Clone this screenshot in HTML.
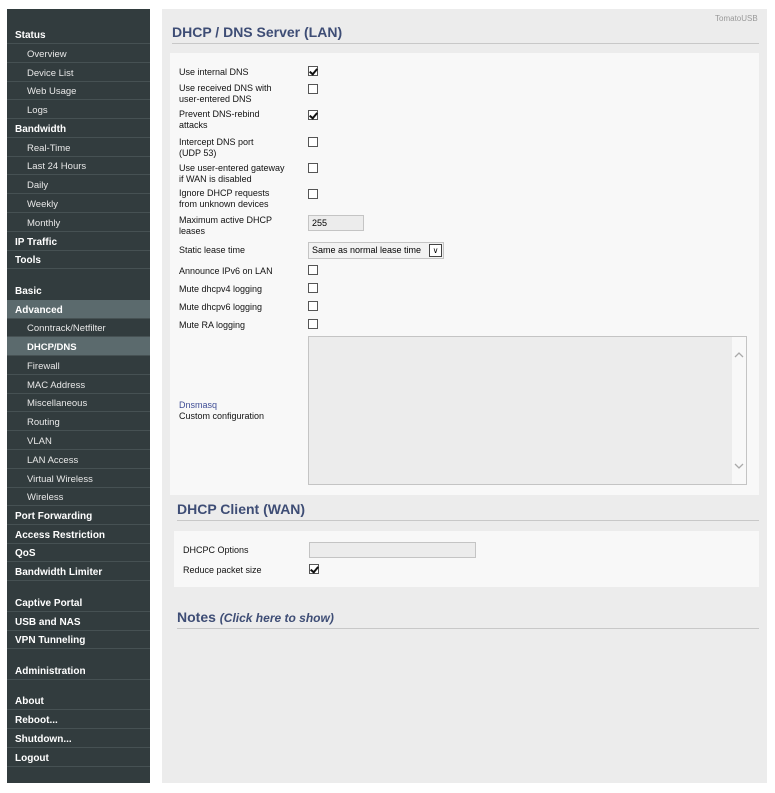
<!DOCTYPE html>
<html><head><meta charset="utf-8"><style>
*{margin:0;padding:0;box-sizing:border-box}
body{width:775px;height:793px;background:#fff;font-family:"Liberation Sans",sans-serif;position:relative;overflow:hidden}
#side{position:absolute;left:7px;top:9px;width:143px;height:774px;background:#323c3e}
.it{position:absolute;left:0;width:143px;height:19px;line-height:21px;color:#fff;font-size:10px;border-bottom:1px solid #465153}
.t{font-weight:bold;padding-left:8px}
.s{padding-left:20px;font-size:9.5px;color:#e8e8e8}
.hl{background:#5b6a6d}
#main{position:absolute;left:162px;top:9px;width:605px;height:774px;background:#ececec}
.h{position:absolute;color:#3e4d75;font-weight:bold;font-size:14px;border-bottom:1px solid #c8c8c8}
.box{position:absolute;background:#f8f8f8}
.l{position:absolute;font-size:9px;color:#111;line-height:11px}
.cb{position:absolute;width:10px;height:10px;border:1px solid #555;background:#fff}
.cb.c::after{content:"";position:absolute;left:2px;top:0px;width:3px;height:6px;border:solid #111;border-width:0 2px 2px 0;transform:rotate(40deg)}
.in{position:absolute;background:#ececec;border:1px solid #c4c4c4;font-size:9px;line-height:14px;padding-left:3px}
</style></head><body>
<div id="side">
<div class="it t" style="top:16px">Status</div>
<div class="it s" style="top:35px">Overview</div>
<div class="it s" style="top:54px">Device List</div>
<div class="it s" style="top:72px">Web Usage</div>
<div class="it s" style="top:91px">Logs</div>
<div class="it t" style="top:110px">Bandwidth</div>
<div class="it s" style="top:129px">Real-Time</div>
<div class="it s" style="top:147px">Last 24 Hours</div>
<div class="it s" style="top:166px">Daily</div>
<div class="it s" style="top:185px">Weekly</div>
<div class="it s" style="top:204px">Monthly</div>
<div class="it t" style="top:223px">IP Traffic</div>
<div class="it t" style="top:241px">Tools</div>
<div class="it t" style="top:272px;border:0">Basic</div>
<div class="it t hl" style="top:291px">Advanced</div>
<div class="it s" style="top:309px">Conntrack/Netfilter</div>
<div class="it s hl" style="top:328px;font-weight:bold;color:#fff">DHCP/DNS</div>
<div class="it s" style="top:347px">Firewall</div>
<div class="it s" style="top:366px">MAC Address</div>
<div class="it s" style="top:384px">Miscellaneous</div>
<div class="it s" style="top:403px">Routing</div>
<div class="it s" style="top:422px">VLAN</div>
<div class="it s" style="top:441px">LAN Access</div>
<div class="it s" style="top:460px">Virtual Wireless</div>
<div class="it s" style="top:478px">Wireless</div>
<div class="it t" style="top:497px">Port Forwarding</div>
<div class="it t" style="top:516px">Access Restriction</div>
<div class="it t" style="top:534px">QoS</div>
<div class="it t" style="top:553px">Bandwidth Limiter</div>
<div class="it t" style="top:584px">Captive Portal</div>
<div class="it t" style="top:603px">USB and NAS</div>
<div class="it t" style="top:621px">VPN Tunneling</div>
<div class="it t" style="top:652px">Administration</div>
<div class="it t" style="top:682px">About</div>
<div class="it t" style="top:701px">Reboot...</div>
<div class="it t" style="top:720px">Shutdown...</div>
<div class="it t" style="top:739px">Logout</div>
</div>
<div id="main"></div>
<div style="position:absolute;left:715px;top:14px;font-size:8px;color:#999">TomatoUSB</div>
<div class="h" style="left:172px;top:24px;width:587px;height:20px">DHCP / DNS Server (LAN)</div>
<div class="box" style="left:170px;top:53px;width:589px;height:442px"></div>
<div class="l" style="left:179px;top:67px">Use internal DNS</div><div class="cb c" style="left:308px;top:66px"></div>
<div class="l" style="left:179px;top:83px">Use received DNS with<br>user-entered DNS</div><div class="cb" style="left:308px;top:84px"></div>
<div class="l" style="left:179px;top:109px">Prevent DNS-rebind<br>attacks</div><div class="cb c" style="left:308px;top:110px"></div>
<div class="l" style="left:179px;top:137px">Intercept DNS port<br>(UDP 53)</div><div class="cb" style="left:308px;top:137px"></div>
<div class="l" style="left:179px;top:163px">Use user-entered gateway<br>if WAN is disabled</div><div class="cb" style="left:308px;top:163px"></div>
<div class="l" style="left:179px;top:188px">Ignore DHCP requests<br>from unknown devices</div><div class="cb" style="left:308px;top:189px"></div>
<div class="l" style="left:179px;top:215px">Maximum active DHCP<br>leases</div><div class="in" style="left:308px;top:215px;width:56px;height:16px">255</div>
<div class="l" style="left:179px;top:245px">Static lease time</div>
<div class="in" style="left:308px;top:242px;width:136px;height:17px;background:#f2f2f2">Same as normal lease time<span style="position:absolute;right:1px;top:1px;width:13px;height:13px;border:1px solid #444;background:#fff;font-size:8px;line-height:11px;text-align:center">&#8744;</span></div>
<div class="l" style="left:179px;top:266px">Announce IPv6 on LAN</div><div class="cb" style="left:308px;top:265px"></div>
<div class="l" style="left:179px;top:284px">Mute dhcpv4 logging</div><div class="cb" style="left:308px;top:283px"></div>
<div class="l" style="left:179px;top:302px">Mute dhcpv6 logging</div><div class="cb" style="left:308px;top:301px"></div>
<div class="l" style="left:179px;top:320px">Mute RA logging</div><div class="cb" style="left:308px;top:319px"></div>
<div class="l" style="left:179px;top:400px"><span style="color:#3e4d95">Dnsmasq</span><br>Custom configuration</div>
<div style="position:absolute;left:308px;top:336px;width:439px;height:149px;background:#ececec;border:1px solid #c4c4c4"><div style="position:absolute;right:0;top:0;width:14px;height:147px;background:#f8f8f8">
<svg width="14" height="147" style="position:absolute;left:0;top:0"><path d="M3 20 L7 16 L11 20" fill="none" stroke="#aaa" stroke-width="1.3"/><path d="M3 127 L7 131 L11 127" fill="none" stroke="#aaa" stroke-width="1.3"/></svg></div></div>
<div class="h" style="left:177px;top:501px;width:582px;height:20px">DHCP Client (WAN)</div>
<div class="box" style="left:174px;top:531px;width:585px;height:56px"></div>
<div class="l" style="left:183px;top:545px">DHCPC Options</div><div class="in" style="left:309px;top:542px;width:167px;height:16px"></div>
<div class="l" style="left:183px;top:565px">Reduce packet size</div><div class="cb c" style="left:309px;top:564px"></div>
<div class="h" style="left:177px;top:609px;width:582px;height:20px">Notes <i style="font-size:12px">(Click here to show)</i></div>
</body></html>
